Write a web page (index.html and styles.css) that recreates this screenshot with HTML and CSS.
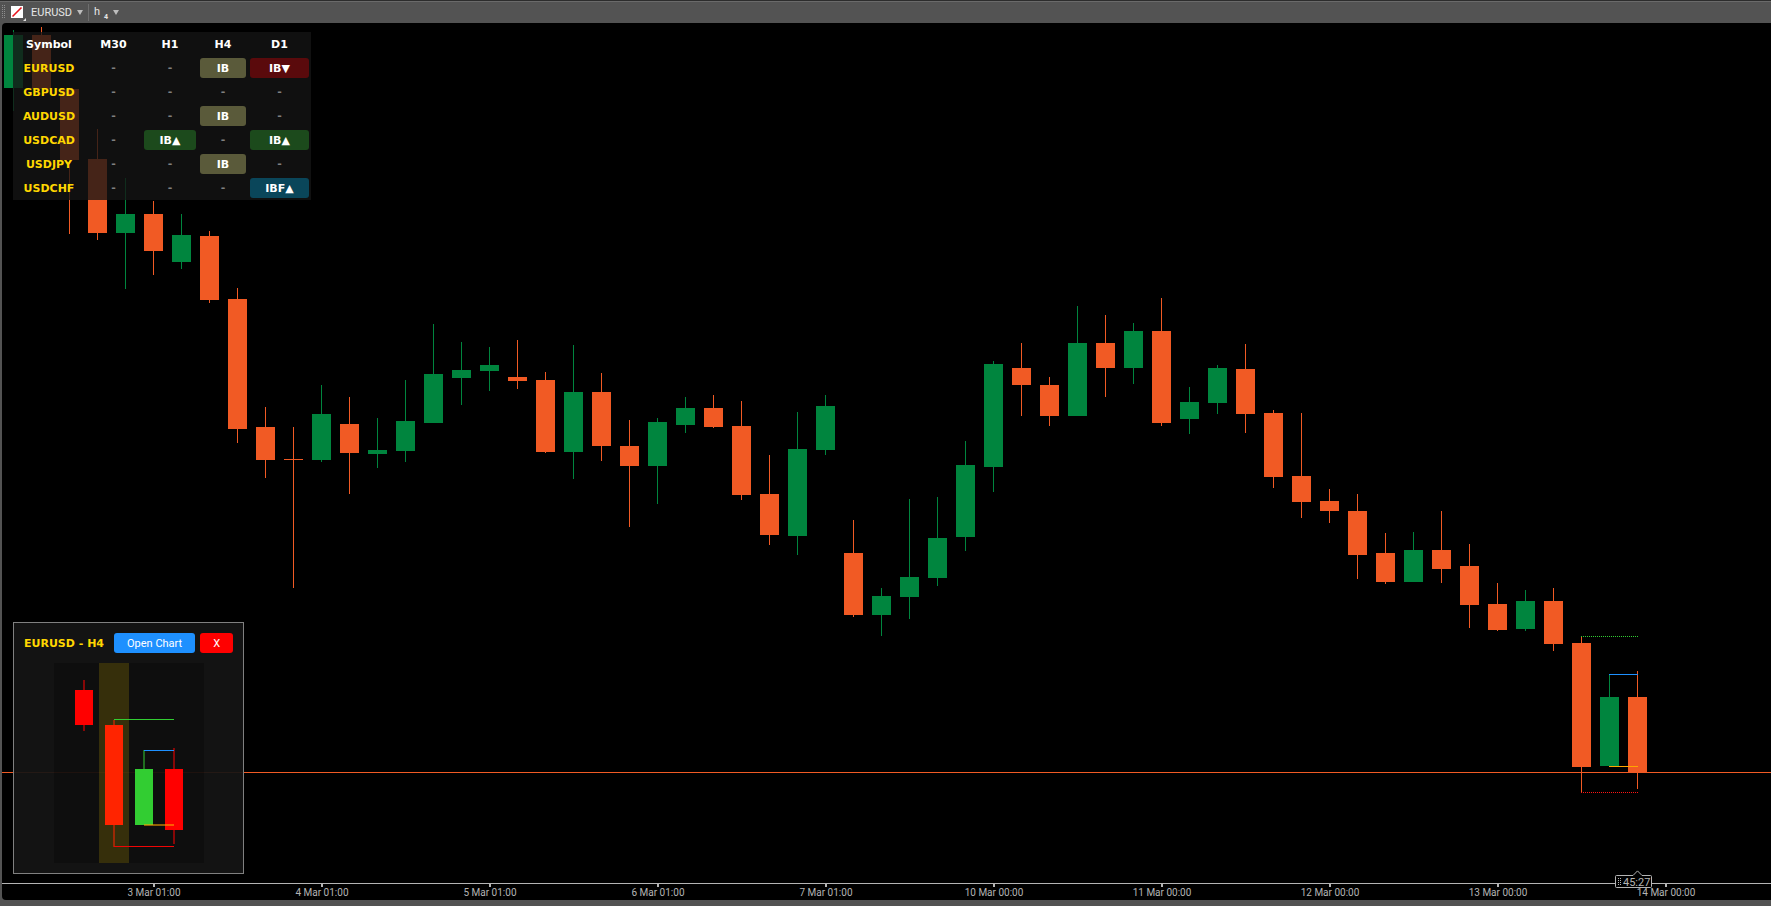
FILE: index.html
```html
<!DOCTYPE html>
<html lang="en">
<head>
  <meta charset="UTF-8">
  <meta name="viewport" content="width=device-width, initial-scale=1.0">
  <title>EURUSD h4</title>
  <link rel="stylesheet" href="styles.css">
</head>
<body>

  <header class="toolbar">
    <svg class="grip" width="4" height="14" viewBox="0 0 4 14" aria-hidden="true">
      <path d="M0.5 0v14M2.5 0v14" stroke="#8e8e8e" stroke-dasharray="1 1"/>
    </svg>
    <button class="tool color-tool" aria-label="Link colour">
      <svg width="15" height="15" viewBox="0 0 15 15">
        <rect width="12" height="12" fill="#fff"/>
        <path d="M1.5 10.5L10.5 1.5" stroke="#e8141c" stroke-width="1.6"/>
        <path d="M15 12v3h-3z" fill="#ddd"/>
      </svg>
    </button>
    <button class="tool symbol-tool">EURUSD <span class="caret"></span></button>
    <button class="tool period-tool"><span>h</span><sub>4</sub> <span class="caret"></span></button>
  </header>

  <main class="chart">
    <svg class="candles" id="candles" aria-label="EURUSD candles"></svg>

    <div class="scanner">
      <table>
        <colgroup>
          <col class="col-symbol"><col class="col-m30"><col class="col-h1"><col class="col-h4"><col class="col-d1">
        </colgroup>
        <thead>
          <tr><th>Symbol</th><th>M30</th><th>H1</th><th>H4</th><th>D1</th></tr>
        </thead>
        <tbody>
          <tr><th>EURUSD</th><td>-</td><td>-</td><td><button class="ib">IB</button></td><td><button class="ib down">IB▼</button></td></tr>
          <tr><th>GBPUSD</th><td>-</td><td>-</td><td>-</td><td>-</td></tr>
          <tr><th>AUDUSD</th><td>-</td><td>-</td><td><button class="ib">IB</button></td><td>-</td></tr>
          <tr><th>USDCAD</th><td>-</td><td><button class="ib up">IB▲</button></td><td>-</td><td><button class="ib up">IB▲</button></td></tr>
          <tr><th>USDJPY</th><td>-</td><td>-</td><td><button class="ib">IB</button></td><td>-</td></tr>
          <tr><th>USDCHF</th><td>-</td><td>-</td><td>-</td><td><button class="ib fakey">IBF▲</button></td></tr>
        </tbody>
      </table>
    </div>

    <section class="preview">
      <div class="preview-head">
        <h2>EURUSD - H4</h2>
        <button class="open-btn">Open Chart</button>
        <button class="close-btn">X</button>
      </div>
      <svg class="preview-chart" width="150" height="200" viewBox="0 0 150 200" shape-rendering="crispEdges">
        <rect width="150" height="200" fill="#0e0e0e"/>
        <rect y="109" width="150" height="1" fill="#1e120e"/>
        <g fill="#ff0000">
          <rect x="29" y="17" width="2" height="51" opacity=".5"/>
          <rect x="21" y="27" width="18" height="35"/>
          <rect x="59" y="57" width="2" height="127" opacity=".5"/>
          <rect x="51" y="62" width="18" height="100"/>
          <rect x="119" y="85" width="2" height="96" opacity=".5"/>
          <rect x="111" y="106" width="18" height="61"/>
        </g>
        <g fill="#32cd32">
          <rect x="89" y="87" width="2" height="75" opacity=".5"/>
          <rect x="81" y="106" width="18" height="56"/>
        </g>
        <!-- mother bar -->
        <rect x="45" width="30" height="200" fill="#ffd700" opacity=".17"/>
        <rect x="60" y="56" width="60" height="1" fill="#32cd32"/>
        <rect x="90" y="87" width="30" height="1" fill="#1e90ff"/>
        <rect x="90" y="161" width="30" height="2" fill="#ffa500" opacity=".55"/>
        <rect x="60" y="183" width="60" height="1" fill="#f00505"/>
      </svg>
    </section>

    <svg class="countdown" width="38" height="19" viewBox="0 0 38 19" aria-label="Bar closes in 45:27">
      <path d="M1.500 5.500H18L22.500 .9L27 5.500H35.500Q36.500 5.500 36.500 6.500V16.500Q36.500 17.500 35.500 17.500H1.500Q.5 17.500 .5 16.500V6.500Q.5 5.500 1.500 5.500Z" fill="#000" stroke="#b4b4b4"/>
      <path d="M3.500 8v8M5.500 8v8" stroke="#b4b4b4" stroke-dasharray="1 1"/>
      <text x="8" y="16">45:27</text>
    </svg>
  </main>

  <footer class="statusbar"></footer>

  <script src="chart.js"></script>
</body>
</html>
```

FILE: styles.css
```css
* {
  box-sizing: border-box;
}

body {
  margin: 0;
  height: 100vh;
  display: flex;
  flex-direction: column;
  overflow: hidden;
  background: #535353;
  color: #fff;
  font-family: Roboto, "Liberation Sans", sans-serif;
  font-size: 11px;
}

button {
  margin: 0;
  border: none;
  font: inherit;
  color: inherit;
  cursor: pointer;
}

/* toolbar */
.toolbar {
  height: 23px;
  flex: none;
  display: flex;
  align-items: center;
  padding-left: 2px;
  border-top: 1px solid #2c2c2c;
  background: #535353;
  box-shadow: inset 0 1px #6a6a6a;
}

.tool {
  display: flex;
  align-items: center;
  height: 17px;
  padding: 0;
  background: none;
  color: #e6e6e6;
}

.color-tool {
  margin: 2px 5px 0 5px;
}

.symbol-tool {
  gap: 5px;
  padding-right: 5px;
  border-right: 1px solid #6e6e6e;
}

.period-tool {
  padding-left: 5px;
}

.period-tool span:first-child {
  margin-bottom: 2px;
}

.period-tool sub {
  margin: 10px 5px 0 4px;
  font-size: 7px;
  font-weight: bold;
  line-height: 8px;
}

.caret {
  border: 3px solid transparent;
  border-top: 5px solid #bdbdbd;
  border-bottom: none;
}

/* chart area */
.chart {
  position: relative;
  flex: 1;
  margin-left: 2px;
  overflow: hidden;
  border-radius: 4px 0 0 4px;
  background: #000;
}

.candles {
  display: block;
  width: 100%;
  height: 100%;
}

.bull { fill: #00853e; }
.bear { fill: #f15a24; }
.axis { fill: #b4b4b4; }

.date {
  fill: #b4b4b4;
  font-size: 10px;
  text-anchor: middle;
}

.statusbar {
  height: 6px;
  flex: none;
}

/* inside bar scanner */
.scanner {
  position: absolute;
  top: 9px;
  left: 11px;
  background: rgba(20, 20, 20, 0.78);
  font-family: "DejaVu Sans", Verdana, sans-serif;
  font-weight: bold;
}

.scanner table {
  width: 298px;
  table-layout: fixed;
  border-collapse: collapse;
}

.col-symbol { width: 72px; }
.col-m30 { width: 57px; }
.col-h1 { width: 56px; }
.col-h4 { width: 50px; }
.col-d1 { width: 63px; }

.scanner tr {
  height: 24px;
}

.scanner th,
.scanner td {
  padding: 0 2px;
  line-height: 20px;
  text-align: center;
}

.scanner th {
  padding-top: 2px;
}

.scanner td {
  color: #808080;
}

.scanner tbody th {
  color: #ffd700;
}

.ib {
  display: block;
  width: 100%;
  height: 20px;
  padding: 1px 0 0;
  border-radius: 3px;
  background: #5a5a3a;
  color: #fff;
}

.ib.up { background: #1c4a1c; }
.ib.down { background: #5a0a0c; }
.ib.fakey { background: #0a465a; }

/* preview popup */
.preview {
  position: absolute;
  left: 11px;
  bottom: 26px;
  padding: 10px;
  border: 1px solid #808080;
  background: rgba(20, 20, 20, 0.93);
}

.preview-head {
  display: flex;
  align-items: center;
  gap: 5px;
}

.preview h2 {
  margin: 0 5px 0 0;
  font-family: "DejaVu Sans", Verdana, sans-serif;
  font-size: 11px;
  color: #ffd700;
}

.preview button {
  height: 20px;
  padding: 0 13px;
  border-radius: 3px;
}

.open-btn { background: #1e90ff; }
.close-btn { background: #ff0000; }

.preview-chart {
  display: block;
  margin: 10px auto 0;
}

.countdown {
  position: absolute;
  left: 1613px;
  bottom: 11px;
}

.countdown text {
  fill: #b4b4b4;
  font-size: 11px;
}
```

FILE: chart.js
```js
// [direction, high, body top, body bottom, low]
const bars = [
  ['bull', 30, 35, 88, 111], ['bear', 27, 35, 89, 89], ['bear', 89, 89, 160, 234],
  ['bear', 129, 159, 233, 240], ['bull', 178, 214, 233, 289], ['bear', 201, 214, 251, 275],
  ['bull', 214, 235, 262, 269], ['bear', 231, 236, 300, 303], ['bear', 288, 299, 429, 443],
  ['bear', 407, 427, 460, 478], ['bear', 427, 459, 460, 588], ['bull', 385, 414, 460, 462],
  ['bear', 397, 424, 453, 494], ['bull', 418, 450, 454, 468], ['bull', 380, 421, 451, 462],
  ['bull', 324, 374, 423, 423], ['bull', 342, 370, 378, 405], ['bull', 347, 365, 371, 391],
  ['bear', 340, 377, 381, 389], ['bear', 372, 380, 452, 453], ['bull', 345, 392, 452, 479],
  ['bear', 373, 392, 446, 461], ['bear', 420, 446, 466, 527], ['bull', 418, 422, 466, 504],
  ['bull', 397, 408, 425, 433], ['bear', 395, 408, 427, 428], ['bear', 401, 426, 495, 500],
  ['bear', 455, 494, 535, 545], ['bull', 412, 449, 536, 555], ['bull', 395, 406, 450, 455],
  ['bear', 520, 553, 615, 617], ['bull', 588, 596, 615, 636], ['bull', 499, 577, 597, 619],
  ['bull', 497, 538, 578, 586], ['bull', 441, 465, 537, 551], ['bull', 361, 364, 467, 492],
  ['bear', 343, 368, 385, 416], ['bear', 377, 385, 416, 426], ['bull', 306, 343, 416, 416],
  ['bear', 315, 343, 368, 397], ['bull', 323, 331, 368, 384], ['bear', 298, 331, 423, 426],
  ['bull', 387, 402, 419, 434], ['bull', 365, 368, 403, 414], ['bear', 344, 369, 414, 433],
  ['bear', 410, 413, 477, 488], ['bear', 413, 476, 502, 518], ['bear', 489, 501, 511, 523],
  ['bear', 494, 511, 555, 579], ['bear', 533, 553, 582, 584], ['bull', 532, 550, 582, 582],
  ['bear', 511, 550, 569, 583], ['bear', 544, 566, 605, 628], ['bear', 583, 604, 630, 631],
  ['bull', 590, 601, 629, 631], ['bear', 588, 601, 644, 651], ['bear', 636, 643, 767, 793],
  ['bull', 674, 697, 766, 766], ['bear', 671, 697, 772, 789]
];

const dates = ['3 Mar 01:00', '4 Mar 01:00', '5 Mar 01:00', '6 Mar 01:00', '7 Mar 01:00',
  '10 Mar 00:00', '11 Mar 00:00', '12 Mar 00:00', '13 Mar 00:00', '14 Mar 00:00'];

const STEP = 28;
const FIRST = 11;
const TOP = 23;

function rect(cls, x, y, w, h, fill) {
  return `<rect class="${cls}" x="${x}" y="${y - TOP}" width="${w}" height="${h}"${fill ? ` fill="${fill}"` : ''}/>`;
}

function dotted(x, y, w, color) {
  return `<path d="M${x} ${y - TOP + 0.5}h${w}" stroke="${color}" stroke-dasharray="1 1"/>`;
}

let out = '<g shape-rendering="crispEdges">';
bars.forEach(([dir, high, top, bottom, low], i) => {
  const x = FIRST + i * STEP;
  out += rect(dir, x, high, 1, low - high);
  out += rect(dir, x - 9, top, 19, bottom - top);
});

// current price
out += rect('bear', 0, 772, '100%', 1);

// inside bar levels
out += dotted(1579, 636, 57, '#32cd32');
out += dotted(1579, 792, 57, '#ff1414');
out += rect('level', 1607, 674, 29, 1, '#1e90ff');
out += rect('level', 1607, 766, 29, 1, '#ffa500');

// time axis
out += rect('axis', 0, 883, '100%', 1);
dates.forEach((d, i) => {
  out += rect('axis', 151 + i * 168, 884, 2, 3);
});
out += '</g>';
dates.forEach((d, i) => {
  out += `<text class="date" x="${152 + i * 168}" y="${896 - TOP}">${d}</text>`;
});

document.getElementById('candles').innerHTML = out;
```
